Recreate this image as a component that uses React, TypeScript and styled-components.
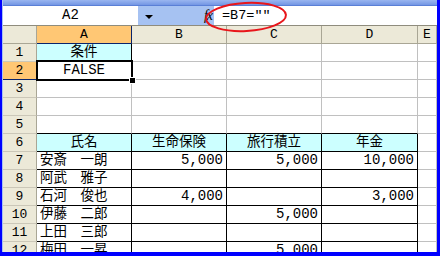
import styled, { createGlobalStyle } from "styled-components";

const Global = createGlobalStyle`
  body {
    margin: 0;
    background: #fff;
  }
`;

const LATIN = `"Liberation Mono", "Noto Sans CJK JP", monospace`;
const GRID = "#c0c0c0";
const INK = "#000";
const CYAN = "#ccffff";
const HEAD = "#ece9d8";
const PICK = "#ffc774";
const NAVY = "#0a246a";

const Frame = styled.div`
  position: relative;
  box-sizing: border-box;
  width: 440px;
  height: 256px;
  border-left: 2px solid #0000ff;
  border-right: 3px solid #0000ff;
  border-bottom: 4px solid #0000ff;
  overflow: hidden;
  font-family: ${LATIN};
  color: #000;
`;

const Body = styled.div`
  border-left: 1px solid #a9c3f3;
  height: 100%;
`;

const TitleStrip = styled.div`
  height: 6px;
  box-sizing: border-box;
  background: linear-gradient(#9ab6f0, #7396e4);
  border-bottom: 1px solid #5a7fd6;
`;

const FormulaBar = styled.div`
  display: flex;
  height: 19px;
  background: #a6c2f2;
`;

const NameBox = styled.div`
  width: 135px;
  background: #fff;
  display: flex;
  align-items: center;
  justify-content: center;
  font-size: 14px;
  line-height: 19px;
`;

const Tools = styled.div`
  width: 76px;
  display: flex;
  align-items: center;
  justify-content: space-between;
  padding: 0 2px 0 7px;
  box-sizing: border-box;
`;

const DropArrow = styled.span`
  width: 0;
  height: 0;
  border-left: 4px solid transparent;
  border-right: 4px solid transparent;
  border-top: 4px solid #000;
  margin-top: 2px;
`;

const Fx = styled.span`
  font-family: "Liberation Serif", serif;
  font-style: italic;
  font-size: 14px;
  letter-spacing: -1px;
`;

const Input = styled.div`
  flex: 1;
  background: #fff;
  padding-left: 8px;
  font-size: 13.5px;
  line-height: 19px;
`;

const Ring = styled.svg`
  position: absolute;
  left: 201px;
  top: 1px;
  pointer-events: none;
`;

const Sheet = styled.div`
  display: grid;
  grid-template-columns: 34px 95px 95px 95px 96px 19px;
  grid-auto-rows: 18px;
  border-top: 1px solid #8f8c7d;
`;

const Head = styled.div<{ $on?: boolean; $row?: boolean }>`
  box-sizing: border-box;
  background: ${(p) => (p.$on ? PICK : HEAD)};
  border-right: 1px solid ${(p) => (p.$on && !p.$row ? NAVY : "#a9a695")};
  border-bottom: 1px solid ${(p) => (p.$on ? NAVY : p.$row ? "#cbc7b8" : "#a9a695")};
  display: flex;
  align-items: flex-end;
  justify-content: center;
  font-size: 13px;
  line-height: 16px;
`;

const Cell = styled.div<{
  $bg?: string;
  $align?: "left" | "center" | "right";
  $right?: string;
  $bottom?: string;
  $jp?: boolean;
}>`
  position: relative;
  box-sizing: border-box;
  background: ${(p) => p.$bg ?? "#fff"};
  border-right: 1px solid ${(p) => p.$right ?? GRID};
  border-bottom: 1px solid ${(p) => p.$bottom ?? GRID};
  display: flex;
  align-items: flex-end;
  justify-content: ${(p) =>
    p.$align === "right" ? "flex-end" : p.$align === "center" ? "center" : "flex-start"};
  padding: 0 3px;
  font-size: ${(p) => (p.$jp ? "13.5px" : "14px")};
  line-height: 17px;
  white-space: nowrap;
`;

const Selection = styled.span`
  position: absolute;
  left: -1px;
  top: -2px;
  right: -2px;
  bottom: -2px;
  border: 2px solid #000;
  z-index: 2;
`;

const Handle = styled.span`
  position: absolute;
  right: -5px;
  bottom: -5px;
  width: 5px;
  height: 5px;
  background: #000;
  border: 1px solid #fff;
`;

type Row = { n: number; cells: string[] };

const rows: Row[] = [
  { n: 1, cells: ["条件", "", "", ""] },
  { n: 2, cells: ["FALSE", "", "", ""] },
  { n: 3, cells: ["", "", "", ""] },
  { n: 4, cells: ["", "", "", ""] },
  { n: 5, cells: ["", "", "", ""] },
  { n: 6, cells: ["氏名", "生命保険", "旅行積立", "年金"] },
  { n: 7, cells: ["安斎　一朗", "5,000", "5,000", "10,000"] },
  { n: 8, cells: ["阿武　雅子", "", "", ""] },
  { n: 9, cells: ["石河　俊也", "4,000", "", "3,000"] },
  { n: 10, cells: ["伊藤　二郎", "", "5,000", ""] },
  { n: 11, cells: ["上田　三郎", "", "", ""] },
  { n: 12, cells: ["梅田　一昇", "", "5,000", ""] },
];

const cols = ["A", "B", "C", "D", "E"];

function DataCell({ row, col, text }: { row: number; col: number; text: string }) {
  const inTable = row >= 6;
  const jp = /[^\x00-\x7f]/.test(text);
  const bg = row === 1 && col === 0 ? CYAN : row === 6 ? CYAN : undefined;
  const align = row <= 2 || row === 6 ? "center" : col === 0 ? "left" : "right";
  const right = inTable || (row === 1 && col === 0) ? INK : undefined;
  const bottom = inTable || row === 5 ? INK : undefined;
  return (
    <Cell $bg={bg} $align={align} $right={right} $bottom={bottom} $jp={jp}>
      {text}
      {row === 2 && col === 0 && (
        <Selection>
          <Handle />
        </Selection>
      )}
    </Cell>
  );
}

export default function App() {
  return (
    <Frame>
      <Global />
      <Body>
        <TitleStrip />
        <FormulaBar>
          <NameBox>A2</NameBox>
          <Tools>
            <DropArrow />
            <Fx>fx</Fx>
          </Tools>
          <Input>=B7=""</Input>
        </FormulaBar>
        <Sheet>
          <Head />
          {cols.map((c) => (
            <Head key={c} $on={c === "A"}>
              {c}
            </Head>
          ))}
          {rows.map((r) => (
            <>
              <Head key={`h${r.n}`} $row $on={r.n === 2}>
                {r.n}
              </Head>
              {r.cells.map((t, i) => (
                <DataCell key={`${r.n}-${i}`} row={r.n} col={i} text={t} />
              ))}
              <Cell key={`e${r.n}`} />
            </>
          ))}
        </Sheet>
      </Body>
      <Ring width="88" height="34" viewBox="0 0 88 34">
        <ellipse cx="43" cy="16" rx="40" ry="14" fill="none" stroke="#e8161b" strokeWidth="2" transform="rotate(-3 43 16)" />
      </Ring>
    </Frame>
  );
}
